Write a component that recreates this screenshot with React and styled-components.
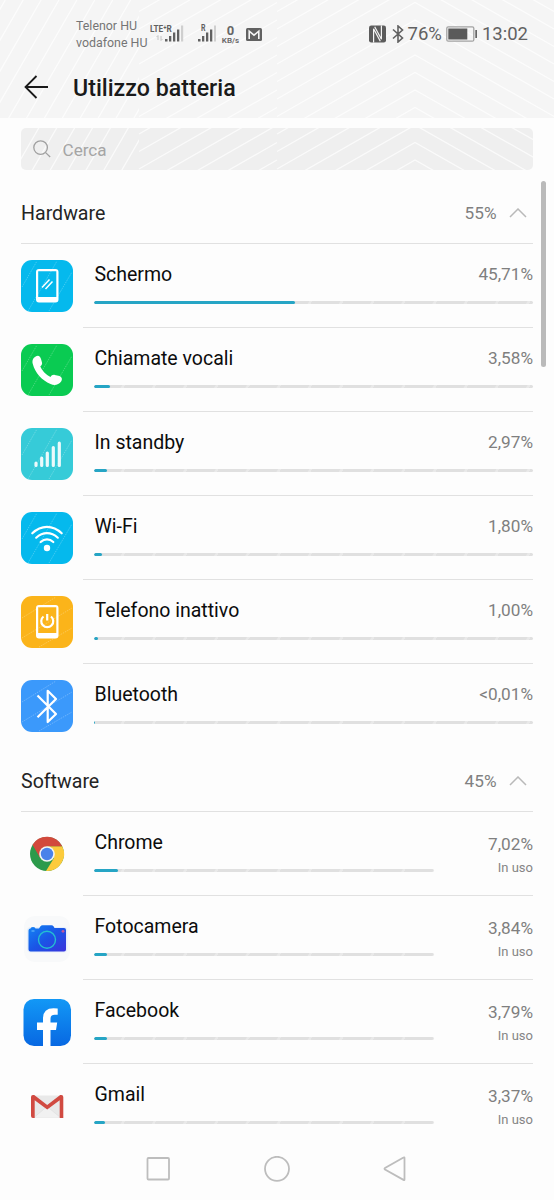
/** @format */

import React from "react";
import styled, { createGlobalStyle } from "styled-components";

const hardware = [
	{ icon: "screen", name: "Schermo", value: 45.71, label: "45,71%" },
	{ icon: "call", name: "Chiamate vocali", value: 3.58, label: "3,58%" },
	{ icon: "standby", name: "In standby", value: 2.97, label: "2,97%" },
	{ icon: "wifi", name: "Wi-Fi", value: 1.8, label: "1,80%" },
	{ icon: "idle", name: "Telefono inattivo", value: 1, label: "1,00%" },
	{ icon: "bluetooth", name: "Bluetooth", value: 0.15, label: "<0,01%" },
];

const software = [
	{ icon: "chrome", name: "Chrome", value: 7.02, label: "7,02%" },
	{ icon: "camera", name: "Fotocamera", value: 3.84, label: "3,84%" },
	{ icon: "facebook", name: "Facebook", value: 3.79, label: "3,79%" },
	{ icon: "gmail", name: "Gmail", value: 3.37, label: "3,37%" },
];

export default function App() {
	return (
		<Screen>
			<GlobalStyle />
			<Header>
				<Stripes left={0} top={0} width={554} height={118} />
				<StatusBar />
				<TitleBar>
					<svg width="26" height="26" viewBox="0 0 26 26" fill="none" stroke="#1a1a1a" strokeWidth="1.8">
						<path d="M13.500 1 2.500 12l11 11M2.500 12H25" />
					</svg>
					<Title>Utilizzo batteria</Title>
				</TitleBar>
			</Header>
			<Search>
				<Stripes left={21} top={128} width={512} height={42} />
				<svg width="18" height="18" viewBox="0 0 18 18" fill="none" stroke="#a0a0a0" strokeWidth="1.3">
					<circle cx="7.6" cy="7.6" r="6.8" />
					<path d="m12.600 12.600 4.600 4.400" />
				</svg>
				<Placeholder>Cerca</Placeholder>
			</Search>
			<Section title="Hardware" total="55%" items={hardware} />
			<Section title="Software" total="45%" items={software} inUse />
			<NavBar>
				<svg width="26" height="26" viewBox="0 0 26 26">
					<rect x="2.500" y="2" width="21.500" height="21.500" rx="1" />
				</svg>
				<svg width="26" height="26" viewBox="0 0 26 26">
					<circle cx="13" cy="12.800" r="12" />
				</svg>
				<svg width="26" height="26" viewBox="0 0 26 26">
					<path d="M21.500 1.900v21.600q0 1-1 .4L2 13.500q-1-.8 0-1.600L20.500 1.500q1-.6 1 .4Z" />
				</svg>
			</NavBar>
			<ScrollThumb />
		</Screen>
	);
}

function StatusBar() {
	return (
		<Status>
			<Carriers>
				<span>Telenor HU</span>
				<span>vodafone HU</span>
			</Carriers>
			<Network>
				<svg width="34" height="20" viewBox="0 0 34 20">
					<text x="0" y="8" fontSize="9.5" fontWeight="700" textLength="21.800" lengthAdjust="spacingAndGlyphs">
						LTE⁺R
					</text>
					<path d="M8 16v-4.500M6.500 13 8 11.500M11 12v4.500M12.500 15 11 16.500" stroke="#c4c4c4" fill="none" />
					<path d="M15 15h2.500v2.500H15zM19 12h2.300v5.500H19zM23 8.500h2.300v9H23zM27 5.500h2.300v12H27z" />
					<path d="M31 1.500h2.200v16H31z" fill="#cfcfcf" />
				</svg>
				<svg width="18" height="20" viewBox="0 0 18 20">
					<text x="3" y="7" fontSize="8.500" fontWeight="700" textLength="4.500" lengthAdjust="spacingAndGlyphs">
						R
					</text>
					<path d="M0 15h2.500v2.500H0zM4 12h2.300v5.500H4zM8 8.500h2.300v9H8zM12 5.500h2.300v12H12z" />
					<path d="M16 1.500h2v16h-2z" fill="#cfcfcf" />
				</svg>
			</Network>
			<Speed>
				<b>0</b>
				<small>KB/s</small>
			</Speed>
			<svg width="16" height="13" viewBox="0 0 16 13">
				<rect width="16" height="13" rx="1.500" fill="#616161" />
				<path d="M3.200 11V3.200L8 7.200l4.800-4V11" fill="none" stroke="#f5f5f5" strokeWidth="1.600" />
			</svg>
			<Right>
				<svg width="17" height="18" viewBox="0 0 17 18">
					<rect y=".5" width="17" height="17" rx="2.200" fill="#5c5c5c" />
					<path d="M4.600 17.500V3.800l6.700 12.500M12.400.5v13.700L5.700 1.700" fill="none" stroke="#f5f5f5" strokeWidth="1.200" />
				</svg>
				<svg width="12" height="18" viewBox="0 0 12 18" fill="none" stroke="#616161" strokeWidth="1.600">
					<path d="m1 4.500 9.500 8.500L6 17V1l4.500 4L1 13.500" />
				</svg>
				<StatusText>76%</StatusText>
				<svg width="32" height="16" viewBox="0 0 32 16">
					<rect x=".8" y=".8" width="27" height="14.400" rx="1.500" fill="none" stroke="#a2a2a2" strokeWidth="1.300" />
					<rect x="2.300" y="2.500" width="19" height="11" fill="#5a5a5a" />
					<path d="M29.300 4h1.700v8h-1.700z" fill="#666" />
				</svg>
				<StatusText>13:02</StatusText>
			</Right>
		</Status>
	);
}

function Section({ title, total, items, inUse }) {
	return (
		<section>
			<SectionHead>
				<SectionTitle>{title}</SectionTitle>
				<Total>{total}</Total>
				<svg width="18" height="10" viewBox="0 0 18 10" fill="none" stroke="#b9b9b9" strokeWidth="1.5">
					<path d="m1 9 8-8 8 8" />
				</svg>
			</SectionHead>
			{items.map((item, i) => (
				<Row key={item.name}>
					<AppIcon name={item.icon} />
					<RowBody $last={i === items.length - 1}>
						<Usage $short={inUse}>
							<Name>{item.name}</Name>
							<Track>
								<Fill style={{ width: `${item.value}%` }} />
							</Track>
						</Usage>
						<Figures $low={inUse}>
							<Percent>{item.label}</Percent>
							{inUse && <State>In uso</State>}
						</Figures>
					</RowBody>
				</Row>
			))}
		</section>
	);
}

/* slanted background lines, in screen coordinates so that the pieces line up */
function Stripes({ left, top, width, height }) {
	const step = 17.5;
	let steep = "";
	let rising = "";
	let chevron = "";
	for (let i = -8; i < 22; i++) {
		const y = 2.5 + step * i;
		chevron += `M277 ${y + 79}L415 ${y}L554 ${y + 79}`;
		rising += `M139 ${y + 9}L277 ${y - 70}`;
		const x = -45 + 17.9 * i;
		steep += `M${x} 180L${x + 104} 0`;
	}
	const id = `steep${top}`;
	return (
		<StripeSvg width={width} height={height} viewBox={`${left} ${top} ${width} ${height}`}>
			<clipPath id={id}>
				<rect width="139" height="180" />
			</clipPath>
			<path d={steep} clipPath={`url(#${id})`} />
			<path d={rising} />
			<path d={chevron} />
		</StripeSvg>
	);
}

const tiles = {
	screen: "#05b9ed",
	call: "#0acb52",
	standby: "#36cbd8",
	wifi: "#05b9ed",
	idle: "#fbb41a",
	bluetooth: "#3b99fb",
};

const phoneBody = "M18 9h16.500q3 0 3 3v27.500q0 3-3 3H18q-3 0-3-3V12q0-3 3-3Zm-.8 2.200v25.800h18.100v-25.800Z";

const glyphs = {
	screen: (
		<>
			<path d={phoneBody} fill="#fff" fillRule="evenodd" />
			<path d="m21 27.500 7.500-8M24.500 29l7-7.500" stroke="#fff" strokeWidth="1.500" />
		</>
	),
	call: (
		<path
			d="M15 12.200C17.500 10.800 19.300 12.200 20 15L21 18.500C21.500 20.500 20.300 21.500 19.300 22.300C21 26.800 25 30.800 29.500 33C30.500 31.500 31.800 30.500 33.800 30.900L38.500 32C41 33 41.500 35.300 40.300 37.200C37.500 41 33.500 41.800 29.500 40C21 36.500 14 28.500 11.800 20C10.800 16 12.300 13.800 15 12.200Z"
			fill="#fff"
		/>
	),
	standby: (
		<path
			d="M15 35.200v2.300M20.700 30.200v7.300M26.300 25v12.500M32.300 19.500v18M38.300 15.200v22.300"
			stroke="#fff"
			strokeOpacity=".9"
			strokeWidth="3.200"
			strokeLinecap="round"
		/>
	),
	wifi: (
		<>
			<g fill="none" stroke="#fff" strokeWidth="2.200" strokeLinecap="round">
				<path d="M11.300 21.300Q18 14.900 26 14.900t14.700 6.400M15.200 25.700q5-4.500 10.800-4.500t10.800 4.500M19.700 30q2.800-2.600 6.300-2.600t6.300 2.600" />
			</g>
			<circle cx="26" cy="36" r="3.200" fill="#fff" />
		</>
	),
	idle: (
		<>
			<path d={phoneBody} fill="#fff" fillRule="evenodd" />
			<path d="M22.500 20.500a6 6 0 1 0 7.500 0M26.200 18v6.500" fill="none" stroke="#fff" strokeWidth="2.200" />
		</>
	),
	bluetooth: (
		<path d="M16.500 15.500 35 34l-8.300 8V10.800L35 19 16.500 37.300" fill="none" stroke="#fff" strokeWidth="2.200" strokeLinejoin="round" />
	),
	chrome: (
		<>
			<circle cx="26" cy="26" r="17" fill="#2c9a4b" />
			<path d="M26 18.300h15.200A17 17 0 0 1 25 43l8-13Z" fill="#fccb3c" />
			<path d="M41.200 18.300H26l-7 11.500-7.500-13A17 17 0 0 1 41.200 18.300Z" fill="#d2493c" />
			<circle cx="26" cy="26" r="7.800" fill="#f4f4f4" />
			<circle cx="26" cy="26" r="6.200" fill="#4a82ea" />
		</>
	),
	camera: (
		<>
			<defs>
				<linearGradient id="cam" x1="0" x2="1" y1="0" y2="1">
					<stop offset="0" stopColor="#1285f5" />
					<stop offset=".5" stopColor="#1a55e6" />
					<stop offset="1" stopColor="#3a32dc" />
				</linearGradient>
			</defs>
			<rect x="3" y="4" width="46" height="46" rx="11" fill="#f8f9fa" />
			<rect x="6" y="15" width="40.500" height="25.500" rx="4" fill="#e6effb" />
			<path d="M9.500 16.500q0-1.500 2.500-1.500t2.500 1.500H18l1.500-2.300q.7-1 2-1h9q1.300 0 2 1l1 1.800h9.500q2 0 2 2v19.500q0 2-2 2H9.500q-2 0-2-2V18.500q0-2 2-2Z" fill="url(#cam)" />
			<circle cx="26" cy="27.700" r="8.500" fill="none" stroke="#25bfd0" strokeWidth="1.400" />
			<circle cx="42" cy="19.300" r="1.400" fill="#c2559c" />
			<path d="M10.500 19h3" stroke="#63b8fa" strokeWidth="1.200" />
		</>
	),
	facebook: (
		<>
			<defs>
				<linearGradient id="fb" x1="0" x2="0" y1="0" y2="1">
					<stop offset="0" stopColor="#1298f6" />
					<stop offset="1" stopColor="#0868e2" />
				</linearGradient>
			</defs>
			<rect x="2.500" y="3" width="47.500" height="47" rx="10.500" fill="url(#fb)" />
			<path d="M22 50V34h-6v-7.500h6v-4q0-10.300 10.500-10.300 2.500 0 4.200.4v6.200h-3q-4.200 0-4.200 4v3.700h6.700L35 34h-5.500v16Z" fill="#fff" />
		</>
	),
	gmail: (
		<>
			<path d="M11 15.500h30.500V38H11Z" fill="#e9e9e9" />
			<path d="m13 37.500 13-11 13.500 11" fill="#f1f1f1" stroke="#dcdcdc" strokeWidth=".6" />
			<path d="M10 17q0-2 2-2h1.200L26.200 25l13-10h1.100q2 0 2 2v21h-3.600V20.300L26.200 29.500 13.700 20.300V38H12q-2 0-2-2Z" fill="#d14a41" />
		</>
	),
};

function AppIcon({ name }) {
	return (
		<svg width="52" height="52" viewBox="0 0 52 52">
			{tiles[name] && (
				<>
					<rect width="52" height="52" rx="11" fill={tiles[name]} />
					<path
						d={name === "idle" || name === "bluetooth" ? "M1 22 35 1M1 42 51 12M18 51 51 32" : "M1 27 16 1M7 51 36 1M28 51 51 12"}
						stroke="#fff"
						strokeOpacity=".25"
						strokeDasharray="1.500 1"
					/>
				</>
			)}
			{glyphs[name]}
		</svg>
	);
}

const GlobalStyle = createGlobalStyle`
	* {
		box-sizing: border-box;
	}
	body {
		margin: 0;
		background: #fdfdfd;
		font-family: Roboto, "Liberation Sans", sans-serif;
	}
	svg {
		display: block;
		flex: none;
	}
`;
const Screen = styled.main`
	position: relative;
	display: flex;
	flex-direction: column;
	width: 554px;
	height: 1200px;
	overflow: hidden;
	background: #fdfdfd;
`;
const Header = styled.header`
	position: relative;
	height: 118px;
	background: #f5f5f5;
`;
const StripeSvg = styled.svg`
	position: absolute;
	inset: 0;
	fill: none;
	stroke: #fff;
	stroke-width: 1.3;
	stroke-opacity: 0.7;
`;
const Status = styled.div`
	position: relative;
	display: flex;
	align-items: center;
	height: 58px;
	padding: 10px 26px 0 76px;
`;
const Carriers = styled.div`
	display: flex;
	flex-direction: column;
	width: 74px;
	color: #757575;
	font-size: 12.4px;
	line-height: 17px;
	white-space: nowrap;
`;
const Network = styled.div`
	display: flex;
	gap: 14px;
	fill: #616161;
`;
const Speed = styled.div`
	display: flex;
	flex-direction: column;
	align-items: center;
	width: 19px;
	margin: 0 6px 0 5px;
	color: #666;
	b {
		font-size: 13px;
		line-height: 13px;
	}
	small {
		font-size: 8px;
		font-weight: 600;
		line-height: 8px;
	}
`;
const Right = styled.div`
	display: flex;
	align-items: center;
	margin-left: auto;
	gap: 4px;
	svg:first-child {
		margin-right: 2px;
	}
`;
const StatusText = styled.span`
	color: #616161;
	font-size: 18.5px;
	line-height: 20px;
`;
const TitleBar = styled.div`
	position: relative;
	display: flex;
	align-items: center;
	height: 60px;
	padding-left: 23px;
`;
const Title = styled.h1`
	margin: 0 0 0 24px;
	color: #1a1a1a;
	font-size: 23.2px;
	font-weight: 500;
`;
const Search = styled.div`
	position: relative;
	display: flex;
	align-items: center;
	height: 42px;
	margin: 10px 21px;
	padding-left: 12px;
	border-radius: 5px;
	background: #efefef;
	overflow: hidden;
	svg {
		z-index: 1;
	}
	svg:first-child {
		z-index: 0;
	}
`;
const Placeholder = styled.span`
	z-index: 1;
	margin-left: 11.5px;
	padding-top: 2px;
	color: #a5a5a5;
	font-size: 17.1px;
`;
const SectionHead = styled.div`
	display: flex;
	align-items: center;
	height: 64px;
	margin: 0 21px;
	padding: 3px 6.5px 0 0;
	border-bottom: 1px solid #e1e1e1;
`;
const SectionTitle = styled.h2`
	margin: 0;
	flex: 1;
	color: #242424;
	font-size: 19.6px;
	font-weight: 400;
`;
const Total = styled.span`
	margin-right: 12px;
	color: #808080;
	font-size: 17.2px;
`;
const Row = styled.div`
	display: flex;
	align-items: center;
	height: 84px;
	padding: 0 21px;
`;
const RowBody = styled.div`
	display: flex;
	flex: 1;
	justify-content: space-between;
	height: 84px;
	margin-left: 10px;
	padding: 18px 0 0 11px;
	border-bottom: 1px solid ${(p) => (p.$last ? "transparent" : "#e1e1e1")};
`;
const Usage = styled.div`
	width: ${(p) => (p.$short ? "340px" : "100%")};
`;
const Name = styled.div`
	height: 39px;
	padding-left: 0.5px;
	color: #0c0c0c;
	font-size: 19.5px;
	line-height: 26px;
	white-space: nowrap;
`;
const Track = styled.div`
	height: 3px;
	border-radius: 2px;
	background: repeating-linear-gradient(120deg, #e0e0e0 0 24px, #e9e9e9 25px 27px);
	overflow: hidden;
`;
const Fill = styled.div`
	height: 3px;
	border-radius: 2px;
	background: #26a5c5;
`;
const Figures = styled.div`
	display: flex;
	flex-direction: column;
	align-items: flex-end;
	width: 0;
	padding-top: ${(p) => (p.$low ? "2px" : 0)};
	white-space: nowrap;
`;
const Percent = styled.span`
	color: #7f7f7f;
	font-size: 17.2px;
	line-height: 25px;
`;
const State = styled.span`
	color: #858585;
	font-size: 13px;
	line-height: 21px;
`;
const NavBar = styled.nav`
	display: flex;
	justify-content: center;
	gap: 93px;
	height: 64px;
	margin-top: -12px;
	padding-top: 20px;
	fill: none;
	stroke: #bdbdbd;
	stroke-width: 1.8;
`;
const ScrollThumb = styled.div`
	position: absolute;
	top: 181px;
	right: 8px;
	width: 5px;
	height: 186px;
	border-radius: 3px;
	background: #bababa;
`;
